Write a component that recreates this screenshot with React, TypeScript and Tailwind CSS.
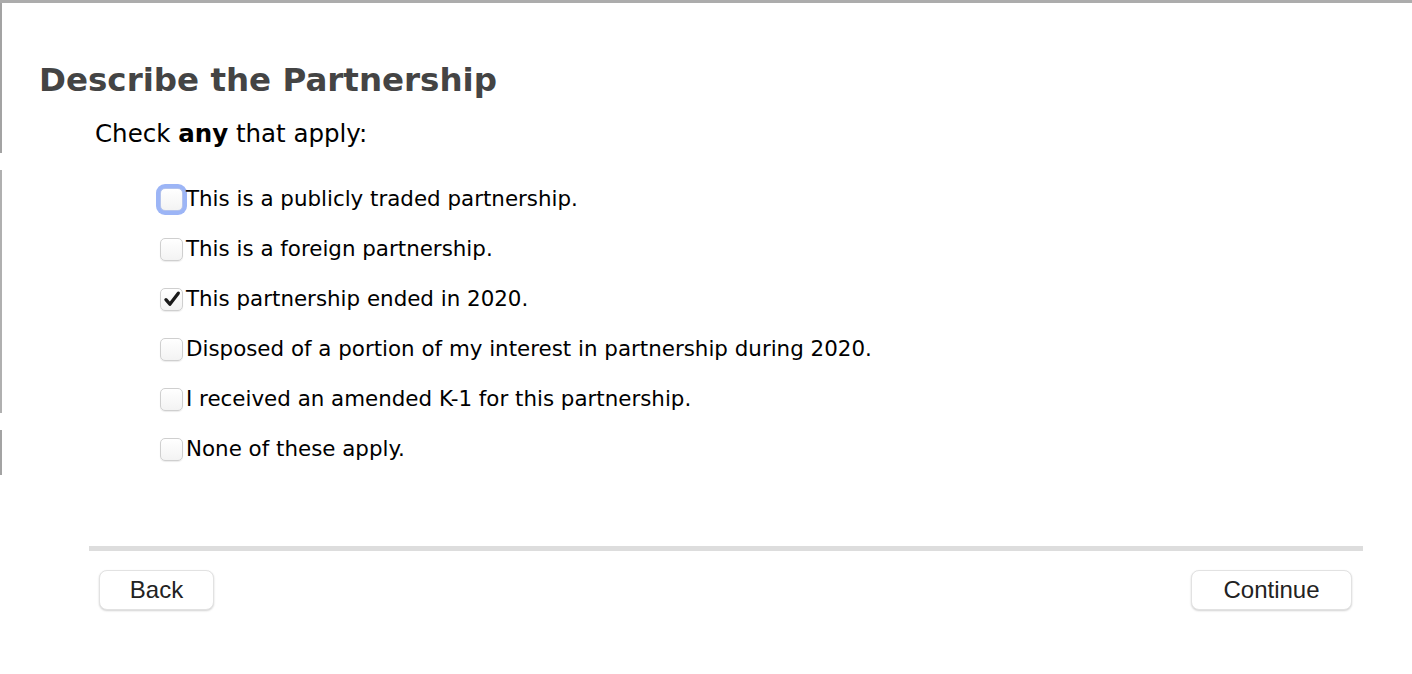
import React, { useState } from "react";

const options = [
    "This is a publicly traded partnership.",
    "This is a foreign partnership.",
    "This partnership ended in 2020.",
    "Disposed of a portion of my interest in partnership during 2020.",
    "I received an amended K-1 for this partnership.",
    "None of these apply.",
];

const Checkbox: React.FC<{ checked: boolean; focused?: boolean; onClick: () => void }> = ({
    checked,
    focused,
    onClick,
}) => (
    <span
        className={
            "shrink-0 flex " +
            (focused ? "p-[4px] -m-[4px] rounded-[9px] bg-[#9cb5f6]" : "")
        }
    >
        <button
            type="button"
            onClick={onClick}
            className={
                "w-[23px] h-[23px] rounded-[5px] border bg-gradient-to-b from-white to-[#f3f3f3] flex items-center justify-center " +
                (focused ? "border-[#b4c3ec]" : "border-[#cfcfcf] shadow-[0_1px_1px_rgba(0,0,0,0.08)]")
            }
        >
            {checked && (
                <svg width="18" height="18" viewBox="0 0 16 16">
                    <path d="M2.6 8.6 L6.1 12.6 L13.6 2.8" fill="none" stroke="#1a1a1a" strokeWidth="2.9" strokeLinecap="round" strokeLinejoin="round" />
                </svg>
            )}
        </button>
    </span>
);

export default function App() {
    const [checked, setChecked] = useState<boolean[]>([false, false, true, false, false, false]);

    const toggle = (i: number) =>
        setChecked((prev) => prev.map((c, j) => (j === i ? !c : c)));

    return (
        <div className="w-[1412px] h-[674px] bg-white flex flex-col overflow-hidden font-['DejaVu_Sans',sans-serif]">
            <div className="h-[3px] bg-[#acacac] shrink-0" />
            <div className="flex flex-1">
                {/* left frame edge */}
                <div className="w-[2px] flex flex-col shrink-0">
                    <div className="h-[150px] bg-[#a3a3a3]" />
                    <div className="h-[17px]" />
                    <div className="h-[243px] bg-[#b0b0b0]" />
                    <div className="h-[17px]" />
                    <div className="h-[45px] bg-[#a3a3a3]" />
                </div>

                <div className="flex-1 flex flex-col">
                    <h1 className="ml-[37px] mt-[60px] text-[32.5px] leading-[34px] font-bold text-[#444444]">
                        Describe the Partnership
                    </h1>
                    <p className="ml-[93px] mt-[22px] text-[24.5px] leading-[30px] text-black">
                        Check <span className="font-bold">any</span> that apply:
                    </p>

                    <div className="ml-[158px] mt-[25px] flex flex-col">
                        {options.map((opt, i) => (
                            <div key={opt} className="h-[50px] flex items-center">
                                <Checkbox checked={checked[i]} focused={i === 0} onClick={() => toggle(i)} />
                                <span
                                    className="ml-[3px] text-[21.4px] text-black cursor-default"
                                    onClick={() => toggle(i)}
                                >
                                    {opt}
                                </span>
                            </div>
                        ))}
                    </div>

                    <div className="ml-[87px] mr-[49px] mt-[72px] h-[5px] bg-[#dddddd]" />

                    <div className="ml-[97px] mr-[60px] mt-[19px] flex justify-between font-['Liberation_Sans',Arial,sans-serif]">
                        <button className="w-[115px] h-[40px] rounded-[8px] bg-white border border-[#e2e2e2] shadow-[0_1px_2px_rgba(0,0,0,0.18)] text-[24px] text-[#222222]">
                            Back
                        </button>
                        <button className="w-[161px] h-[40px] rounded-[8px] bg-white border border-[#e2e2e2] shadow-[0_1px_2px_rgba(0,0,0,0.18)] text-[24px] text-[#222222]">
                            Continue
                        </button>
                    </div>
                </div>
            </div>
        </div>
    );
}
